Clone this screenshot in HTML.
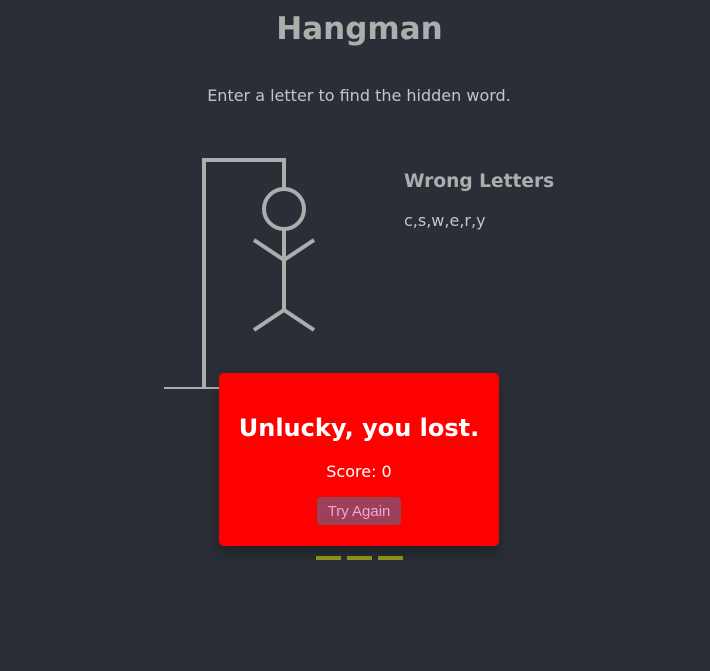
<!DOCTYPE html>
<html><head><style>
body{margin:0;width:710px;height:671px;background:#2a2f37;font-family:"DejaVu Sans",Verdana,sans-serif;position:relative;overflow:hidden}
.a{position:absolute;white-space:nowrap}
</style></head><body>
<div class="a" style="left:0;width:719px;text-align:center;top:11px;font-size:31px;font-weight:bold;color:#adadad">Hangman</div>
<div class="a" style="left:0;width:718px;text-align:center;top:86px;font-size:16px;color:#c4c4c4">Enter a letter to find the hidden word.</div>
<div class="a" style="left:404px;top:171px;font-size:18.6px;font-weight:bold;color:#adadad">Wrong Letters</div>
<div class="a" style="left:404px;top:211px;font-size:16px;color:#c4c4c4">c,s,w,e,r,y</div>
<svg class="a" style="left:0;top:0" width="710" height="671">
<g stroke="#adadad" stroke-width="4" fill="none">
<line x1="164" y1="388" x2="264" y2="388" stroke-width="2"/>
<line x1="204" y1="388" x2="204" y2="160"/>
<line x1="202" y1="160" x2="286" y2="160"/>
<line x1="284" y1="160" x2="284" y2="188"/>
<circle cx="284" cy="209" r="20"/>
<line x1="284" y1="229" x2="284" y2="310"/>
<polyline points="254,240 284,260 314,240"/>
<polyline points="254,330 284,310 314,330"/>
</g>
<g stroke="#9e9e1c" stroke-width="4">
<line x1="316" y1="558" x2="341" y2="558"/>
<line x1="347" y1="558" x2="372" y2="558"/>
<line x1="378" y1="558" x2="403" y2="558"/>
</g>
</svg>
<div class="a" style="left:219px;top:373px;width:280px;height:173px;background:#f00;border-radius:5px;box-shadow:0 10px 15px rgba(0,0,0,.25)">
<div class="a" style="left:0;width:280px;text-align:center;top:41px;font-size:24px;font-weight:bold;color:#fff">Unlucky, you lost.</div>
<div class="a" style="left:0;width:280px;text-align:center;top:89px;font-size:16px;color:#fff">Score: 0</div>
<div class="a" style="left:98px;top:124px;width:82px;height:26px;background:#9e405a;border:1px solid #8a4a50;border-radius:4px;color:#e8a8d8;font-family:'Liberation Sans',Arial,sans-serif;font-size:15px;line-height:27px;text-align:center">Try Again</div>
</div>
</body></html>
